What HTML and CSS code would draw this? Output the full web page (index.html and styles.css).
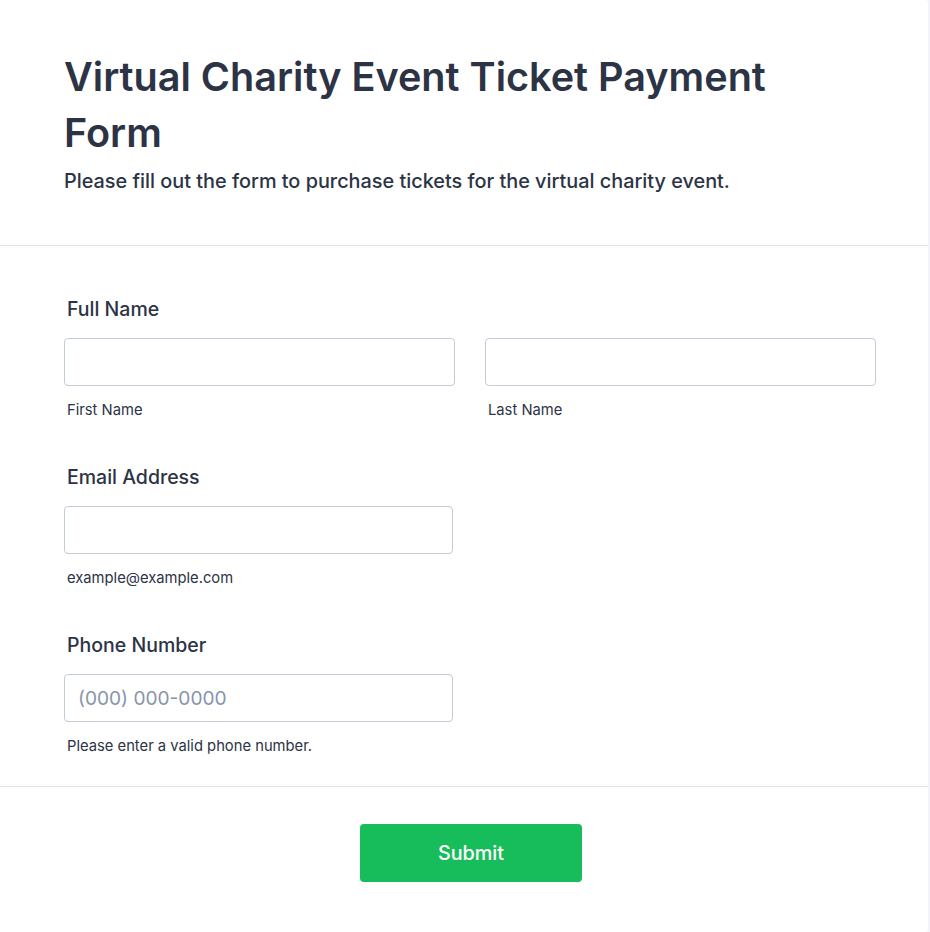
FILE: index.html
```html
<!DOCTYPE html>
<html lang="en">
<head>
<meta charset="utf-8">
<title>Virtual Charity Event Ticket Payment Form</title>
<link rel="stylesheet" href="styles.css">
</head>
<body>
<div class="card">
  <header class="form-header">
    <h1 class="title">Virtual Charity Event Ticket Payment Form</h1>
    <p class="subtitle">Please fill out the form to purchase tickets for the virtual charity event.</p>
  </header>
  <section class="fields">
    <div class="field">
      <label class="label">Full Name</label>
      <div class="name-row">
        <div class="col">
          <input class="input" type="text">
          <span class="sublabel">First Name</span>
        </div>
        <div class="col">
          <input class="input" type="text">
          <span class="sublabel">Last Name</span>
        </div>
      </div>
    </div>
    <div class="field">
      <label class="label">Email Address</label>
      <div class="col narrow">
        <input class="input" type="email">
        <span class="sublabel">example@example.com</span>
      </div>
    </div>
    <div class="field">
      <label class="label">Phone Number</label>
      <div class="col narrow">
        <input class="input" type="tel" placeholder="(000) 000-0000">
        <span class="sublabel">Please enter a valid phone number.</span>
      </div>
    </div>
  </section>
  <footer class="actions">
    <button class="submit" type="button">Submit</button>
  </footer>
</div>
</body>
</html>
```
FILE: styles.css
```css
* { box-sizing: border-box; }
html, body { margin: 0; padding: 0; }
body {
  background: #f3f3fe;
  font-family: Inter, "Noto Sans", sans-serif;
  color: #2c3345;
  width: 930px;
  height: 932px;
  overflow: hidden;
}
.card {
  width: 928px;
  height: 932px;
  background: #fff;
  border-radius: 0 3px 3px 0;
}
.form-header {
  padding: 49px 64px 52px;
  border-bottom: 1px solid #e2e3ef;
}
.title {
  margin: 0;
  font-size: 39.6px;
  line-height: 56px;
  font-weight: 600;
  color: #2c3345;
  max-width: 780px;
}
.subtitle {
  margin: 8px 0 0;
  font-size: 19.85px;
  line-height: 24px;
  font-weight: 500;
  color: #2c3345;
}
.fields {
  padding: 50px 52px 31px 64px;
  border-bottom: 1px solid #e2e3ef;
  display: flex;
  flex-direction: column;
  gap: 45.5px;
}
.field {
  display: flex;
  flex-direction: column;
}
.label {
  font-size: 19.5px;
  line-height: 24px;
  font-weight: 500;
  padding-left: 3px;
  margin-bottom: 17.5px;
  transform: translateY(0.5px);
}
.name-row {
  display: grid;
  grid-template-columns: 391px 391px;
  column-gap: 30px;
}
.col {
  display: flex;
  flex-direction: column;
}
.col.narrow { width: 389px; }
.input {
  height: 48px;
  width: 100%;
  border: 1px solid #c3cad8;
  border-radius: 4px;
  background: #fff;
  padding: 0 13px;
  font-family: Inter, "Noto Sans", sans-serif;
  font-size: 19.1px;
  color: #2c3345;
  outline: none;
}
.input::placeholder { color: #8894ab; }
.sublabel {
  margin-top: 15px;
  padding-left: 3px;
  font-size: 14.75px;
  line-height: 18px;
  color: #2c3345;
}
.actions {
  display: flex;
  justify-content: center;
  padding: 37px 0 0 14px;
}
.submit {
  width: 222px;
  height: 58px;
  background: #18bd5b;
  border: none;
  border-radius: 4px;
  color: #fff;
  font-family: Inter, "Noto Sans", sans-serif;
  font-size: 19.8px;
  font-weight: 500;
}
```
